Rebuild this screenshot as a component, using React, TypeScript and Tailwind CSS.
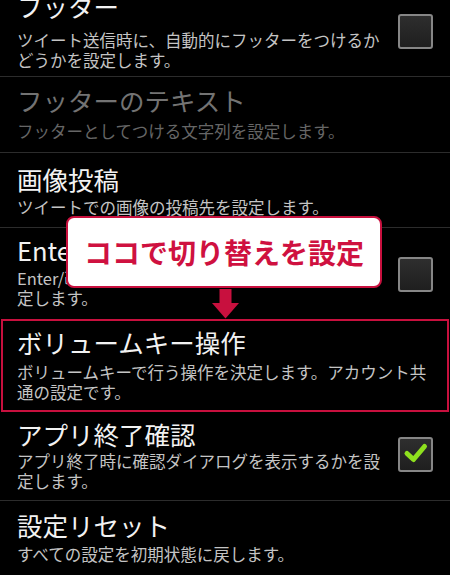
import React from "react";

const font = { fontFamily: '"Noto Sans CJK JP", "Noto Sans", sans-serif' };

function Checkbox({ checked, mt }: { checked?: boolean; mt: string }) {
  return (
    <div
      className={`${mt} w-[35px] h-[35px] shrink-0 rounded-[3px] border-2 border-[#868686] bg-gradient-to-b from-[#2e2e2e] to-[#1f1f1f] flex items-center justify-center`}
    >
      {checked && (
        <svg width="31" height="31" viewBox="0 0 31 31">
          <path
            d="M7 14.5 L13.5 20.5 L24.5 7.5"
            fill="none"
            stroke="#8ee01e"
            strokeWidth="5"
            strokeLinecap="round"
            strokeLinejoin="round"
          />
        </svg>
      )}
    </div>
  );
}

export default function App() {
  const title = "text-[25.5px] leading-[32px] whitespace-nowrap";
  const sub = "text-[16.5px] leading-[20px] whitespace-nowrap";
  return (
    <div className="relative w-[450px] h-[575px] overflow-hidden bg-black" style={font}>
      {/* Row 1 */}
      <div className="h-[77px] border-b border-[#2c2c2c] flex pl-[17px] pr-[17px] justify-between">
        <div className="flex flex-col">
          <div className={`${title} -mt-[10px] text-[#f2f2f2]`}>フッター</div>
          <div className={`${sub} mt-[8px] text-[#c4c4c4]`}>
            <div>ツイート送信時に、自動的にフッターをつけるか</div>
            <div>どうかを設定します。</div>
          </div>
        </div>
        <Checkbox mt="mt-[14px]" />
      </div>

      {/* Row 2 (disabled) */}
      <div className="h-[76px] border-b border-[#2c2c2c] flex flex-col pl-[17px] pt-[7px]">
        <div className={`${title} text-[#737373]`}>フッターのテキスト</div>
        <div className={`${sub} mt-[5px] text-[#666666]`}>フッターとしてつける文字列を設定します。</div>
      </div>

      {/* Row 3 */}
      <div className="h-[75px] border-b border-[#2c2c2c] flex flex-col pl-[17px] pt-[10px]">
        <div className={`${title} text-[#f2f2f2]`}>画像投稿</div>
        <div className={`${sub} mt-[2px] text-[#c4c4c4]`}>ツイートでの画像の投稿先を設定します。</div>
      </div>

      {/* Row 4 */}
      <div className="h-[91px] flex pl-[17px] pr-[17px] justify-between">
        <div className="flex flex-col pt-[6px]">
          <div className={`${title} text-[#f2f2f2]`}>Enterキーで送信</div>
          <div className={`${sub} mt-[2px] text-[#c4c4c4]`}>
            <div>Enter/改行キーでツイート送信するかどうかを設</div>
            <div>定します。</div>
          </div>
        </div>
        <Checkbox mt="mt-[29px]" />
      </div>

      {/* Row 5 (highlighted) */}
      <div className="h-[93px] mx-px border-2 border-[#c8103e] flex flex-col pl-[14px] pt-[5px]">
        <div className={`${title} text-[#f2f2f2]`}>ボリュームキー操作</div>
        <div className={`${sub} mt-[4px] text-[#c4c4c4]`}>
          <div>ボリュームキーで行う操作を決定します。アカウント共</div>
          <div>通の設定です。</div>
        </div>
      </div>

      {/* Row 6 */}
      <div className="h-[89px] border-b border-[#2c2c2c] flex pl-[17px] pr-[17px] justify-between">
        <div className="flex flex-col pt-[6px]">
          <div className={`${title} text-[#f2f2f2]`}>アプリ終了確認</div>
          <div className={`${sub} mt-[1px] text-[#c4c4c4]`}>
            <div>アプリ終了時に確認ダイアログを表示するかを設</div>
            <div>定します。</div>
          </div>
        </div>
        <Checkbox checked mt="mt-[25px]" />
      </div>

      {/* Row 7 */}
      <div className="h-[74px] flex flex-col pl-[17px] pt-[8px]">
        <div className={`${title} text-[#f2f2f2]`}>設定リセット</div>
        <div className={`${sub} mt-[3px] text-[#c4c4c4]`}>すべての設定を初期状態に戻します。</div>
      </div>

      {/* Callout overlay */}
      <div className="absolute left-[66px] top-[216px] w-[316px] h-[72px] bg-white border-2 border-[#c8103e] rounded-[8px] flex items-center justify-center">
        <span className="text-[28px] font-bold leading-none text-[#cf1140] whitespace-nowrap">
          ココで切り替えを設定
        </span>
      </div>

      {/* Arrow */}
      <svg className="absolute left-[212px] top-[289px]" width="28" height="30" viewBox="0 0 28 30">
        <rect x="7.5" y="0" width="12" height="15" fill="#c8103e" />
        <polygon points="0,14 27,14 13.5,29.5" fill="#c8103e" />
      </svg>
    </div>
  );
}
